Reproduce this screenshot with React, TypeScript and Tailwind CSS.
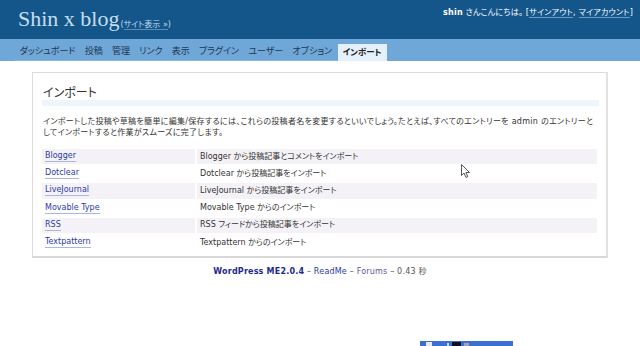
import React from 'react';

const cjk = "font-['DejaVu_Sans','Noto_Sans_CJK_JP',sans-serif] [font-feature-settings:'palt']";

const menu = ['ダッシュボード', '投稿', '管理', 'リンク', '表示', 'プラグイン', 'ユーザー', 'オプション'];

const importers = [
    { name: 'Blogger', desc: 'Blogger から投稿記事とコメントをインポート' },
    { name: 'Dotclear', desc: 'Dotclear から投稿記事をインポート' },
    { name: 'LiveJournal', desc: 'LiveJournal から投稿記事をインポート' },
    { name: 'Movable Type', desc: 'Movable Type からのインポート' },
    { name: 'RSS', desc: 'RSS フィードから投稿記事をインポート' },
    { name: 'Textpattern', desc: 'Textpattern からのインポート' },
];

// small arrow pointer left in the screenshot
const Cursor = () => (
    <svg className="absolute left-[461px] top-[164px]" width="10" height="15" viewBox="0 0 10 15">
        <path d="M0.5 0.5 L0.5 11.5 L3 9 L5 13.5 L6.8 12.7 L4.9 8.5 L8.5 8.5 Z" fill="#fff" stroke="#555" strokeWidth="1" />
    </svg>
);

export default function App() {
    return (
        <div className={`relative w-[640px] h-[346px] bg-white overflow-hidden ${cjk}`}>
            {/* Header */}
            <header className="h-[39px] bg-[#14568a] flex justify-between">
                <div className="flex items-end pl-[18px] pb-[9px]">
                    <h1 className="font-['Liberation_Serif',serif] text-[22px] leading-none text-[#c3def1]">
                        Shin x blog
                    </h1>
                    <span className="ml-[1px] text-[8px] leading-none text-[#c3def1] mb-[1px]">
                        (<span className="border-b border-[#5f8bb3]">サイト表示 »</span>)
                    </span>
                </div>
                <div className="pt-[8px] pr-[7px] text-[8px] leading-[10px] text-white tracking-[0.22px]">
                    <b>shin</b> さんこんにちは。 [<span className="border-b border-[#6f9cc4]">サインアウト</span>, <span className="border-b border-[#6f9cc4]">マイアカウント</span>]
                </div>
            </header>

            {/* Admin menu */}
            <nav className="h-[22px] bg-[#6fa7d8] flex items-end pl-[15px] text-[9px] text-[#1f3550]">
                {menu.map((item) => (
                    <span key={item} className="h-[17px] px-[4.6px] flex items-center border-b border-[#88b8e0]">
                        {item}
                    </span>
                ))}
                <span className="h-[17px] px-[5px] ml-[1px] flex items-center bg-[#e4f0fa] font-bold text-[8.5px] text-[#222]">
                    インポート
                </span>
            </nav>

            {/* Content box */}
            <div className="ml-[32px] mt-[11px] w-[576px] h-[186px] border border-[#dcdcdc] border-r-2 border-b-2 border-r-[#e2e2e2] border-b-[#d8d8d8] pl-[9px] pr-[7px]">
                <h2 className="mt-[13px] pl-[1px] text-[12px] leading-[14px] text-[#333] border-b-[6px] border-[#eef5fc]">
                    インポート
                </h2>
                <p className="mt-[10px] pl-[1px] text-[8px] leading-[11px] text-[#333] tracking-[0.3px]">
                    インポートした投稿や草稿を簡単に編集/保存するには、これらの投稿者名を変更するといいでしょう。たとえば、すべてのエントリーを admin のエントリーとしてインポートすると作業がスムーズに完了します。
                </p>
                <div className="mt-[11px] mr-[2px] grid grid-cols-[153px_1fr] gap-x-[2px] gap-y-[2px] text-[8px]">
                    {importers.map((imp, i) => (
                        <React.Fragment key={imp.name}>
                            <div className={`h-[15.2px] pl-[3px] flex items-center ${i % 2 === 0 ? 'bg-[#f4f2f6]' : ''}`}>
                                <span className="text-[#2a3aa8] border-b border-[#a9b6e6] leading-[10px]">{imp.name}</span>
                            </div>
                            <div className={`h-[15.2px] pl-[3px] flex items-center text-[#333] ${i % 2 === 0 ? 'bg-[#f4f2f6]' : ''}`}>
                                {imp.desc}
                            </div>
                        </React.Fragment>
                    ))}
                </div>
            </div>

            {/* Footer */}
            <p className="mt-[9px] text-center text-[8px] leading-[10px] text-[#555] tracking-[0.2px]">
                <b className="text-[#1c2a8c]">WordPress ME2.0.4</b> – <span className="text-[#2a3aa0]">ReadMe</span> – <span className="text-[#5a5aa0]">Forums</span> – 0.43 秒
            </p>

            <Cursor />

            {/* stray taskbar strip at the bottom edge */}
            <div className="absolute left-[420px] top-[341px] w-[93px] h-[5px] bg-[#3b6fd0] flex items-end gap-[3px] pl-[6px]">
                <span className="w-[6px] h-[4px] bg-[#e8e8e8]" />
                <span className="w-[2px] h-[3px] bg-[#cfd8e8] ml-[12px]" />
                <span className="w-[9px] h-[4px] bg-[#101020]" />
                <span className="w-[5px] h-[3px] bg-[#9aa6b8]" />
            </div>
        </div>
    );
}
